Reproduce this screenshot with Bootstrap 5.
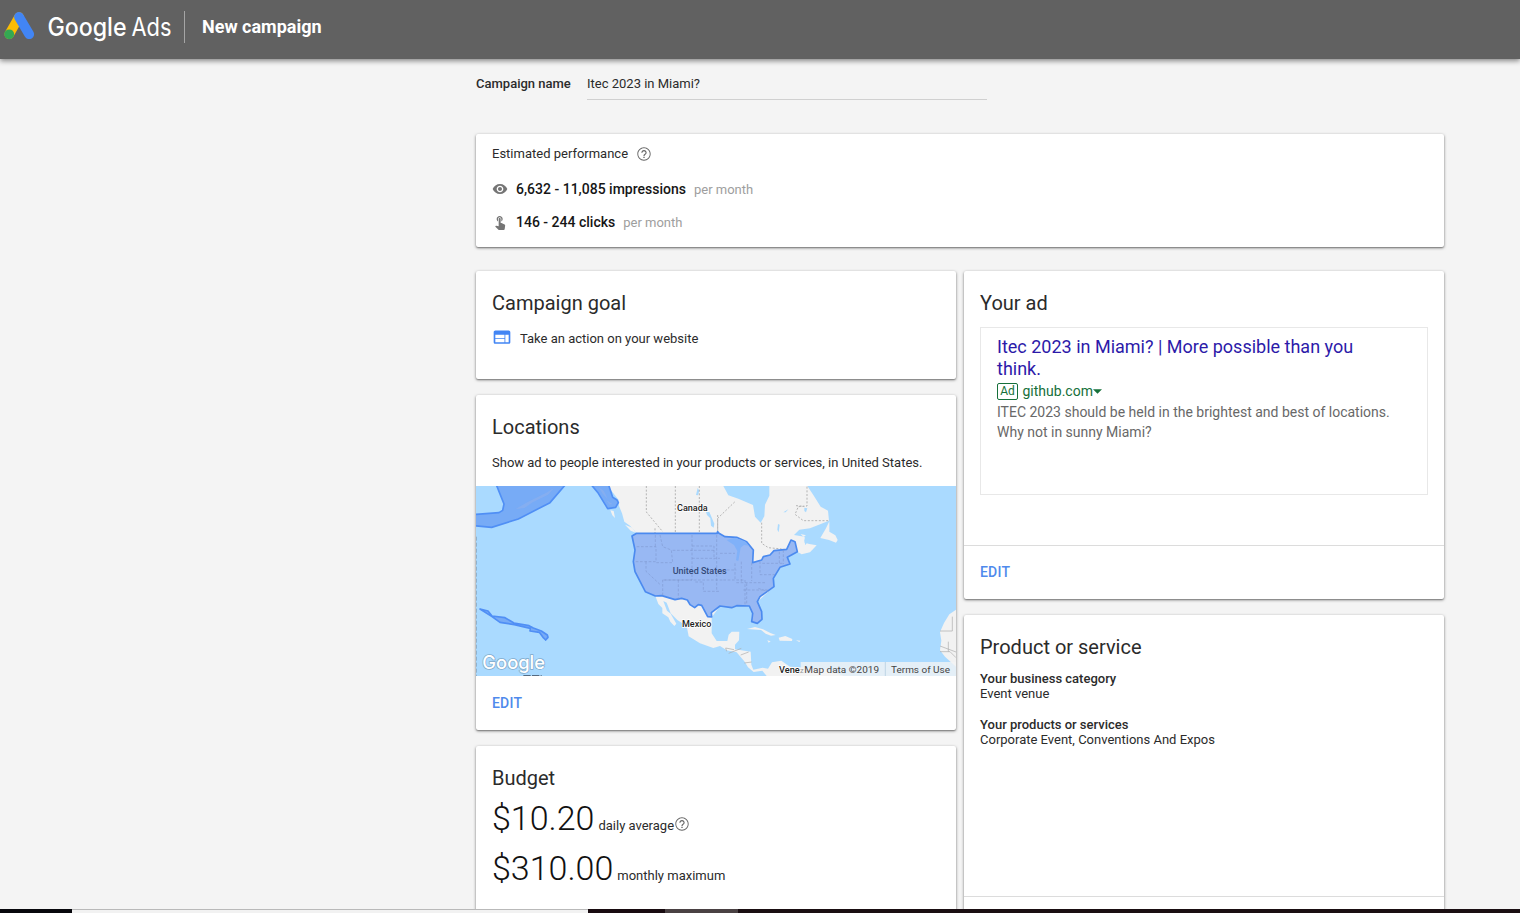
<!DOCTYPE html>
<html lang="en">
<head>
<meta charset="utf-8">
<meta name="viewport" content="width=device-width, initial-scale=1">
<title>New campaign - Google Ads</title>
<link href="https://cdn.jsdelivr.net/npm/bootstrap@5.3.0/dist/css/bootstrap.min.css" rel="stylesheet">
<style>
body{font-family:Roboto,"Liberation Sans",sans-serif;font-size:13px;line-height:15px;color:#2b2b2b;background:#f4f4f4}
svg{display:block;flex:none}
.topbar{height:59px;background:#616161;box-shadow:0 2px 5px rgba(0,0,0,.45);z-index:2;padding:0 0 5px 3px}
.topbar .rule{width:1px;height:32px;background:#a5a5a5;margin:0 17px 0 5px}
.topbar h1{font-size:18px;line-height:22px;font-weight:700;color:#fff}
.content{width:968px;margin-left:476px;padding-top:10px}
.name-field{width:400px;height:31px;border-bottom:1px solid #d0d0d0;padding-top:7px}
.name-label{width:111px;padding-top:7px}
.name-row{margin-bottom:34px}
.fw-medium{font-weight:500}
.nudge{transform:translateY(1px)}
.panel{border:0;border-radius:2px;background:#fff;box-shadow:0 1px 3px rgba(0,0,0,.5),0 1px 1px rgba(0,0,0,.16);color:inherit}
.panel h2{font-size:20px;line-height:24px;font-weight:400;margin:0}
.perf{height:113px;padding:11px 16px;margin-bottom:24px;gap:15px}
.stat{font-size:14px;line-height:18px;color:#161616}
.first-stat{margin-top:4px}
.per{font-size:13px;color:#9e9e9e}
.col-cards{width:480px;gap:16px}
.goal{height:108px;padding:20px 16px}
.goal-line{margin-top:13px}
.goal-text{padding-top:3px}
.loc{height:335px}
.loc-head{height:91px;padding:20px 16px 0}
.map{height:190px}
.edit{font-size:14px;line-height:16px;font-weight:500;color:#4f8aec;text-decoration:none;letter-spacing:.2px}
.loc-foot{padding:19px 16px 0}
.ad-foot{padding:18px 16px 0}
.budget{height:220px;padding:20px 16px}
.money{font-size:34px;line-height:40px;font-weight:300;color:#111;margin-right:4px}
.daily{margin-top:8px}
.daily svg{margin:10px 0 0 0}
.monthly{margin-top:10px}
.ad{height:328px}
.ad-body{height:275px;padding:20px 16px 0;border-bottom:1px solid #dcdcdc}
.preview{height:168px;border:1px solid #e8e8e8;padding:8px 16px;margin-top:12px}
.headline{font-size:18px;line-height:22px;color:#2c1aa9;width:380px}
.site{font-size:14px;line-height:22px;color:#16703a}
.adtag{border:1px solid #16703a;border-radius:2px;font-size:12px;line-height:15px;text-align:center;white-space:nowrap;height:17px;width:21px;margin-right:4.500px}
.desc{font-size:14px;line-height:20px;color:#686868}
.product{height:330px}
.product-body{height:282px;padding:20px 16px 0;border-bottom:1px solid #dcdcdc}
.taskbar{height:4px;z-index:3;background:#1a0e12}
.tb-a{width:72px;background:#07070c}.tb-b{width:516px;background:#f2f2f2;border-top:1px solid #b9b9b9}.tb-c{width:77px;background:#180b10}.tb-d{width:73px;background:#4a4143}
</style>
</head>
<body class="vh-100 overflow-hidden d-flex flex-column">
<svg width="0" height="0" class="position-absolute"><defs>
<symbol id="help" viewBox="0 0 24 24"><path d="M11 18h2v-2h-2v2zm1-16C6.480 2 2 6.480 2 12s4.480 10 10 10 10-4.480 10-10S17.520 2 12 2zm0 18.600c-4.700 0-8.600-3.900-8.600-8.600S7.300 3.400 12 3.400s8.600 3.900 8.600 8.600-3.900 8.600-8.600 8.600zm0-14.600c-2.210 0-4 1.790-4 4h1.700c0-1.200 1-2.300 2.300-2.300s2.300 1.100 2.300 2.300c0 2-3.200 1.750-3.200 5h1.700c0-2.250 3.200-2.500 3.200-5 0-2.210-1.790-4-4-4z"/></symbol>
</defs></svg>

<header class="topbar d-flex align-items-center flex-shrink-0 position-relative">
  <svg width="176" height="40" viewBox="3 7 176 40">
    <path d="M19 17 9.300 34.200" stroke="#fbbc04" stroke-width="9.600" stroke-linecap="round"/>
    <path d="M19 17 29.200 34.200" stroke="#4285f4" stroke-width="9.800" stroke-linecap="round"/>
    <circle cx="9.200" cy="34.300" r="4.900" fill="#34a853"/>
    <g fill="#fff" font-family="Inter, sans-serif" font-size="25">
      <text x="47.500" y="35.700" textLength="79" lengthAdjust="spacingAndGlyphs" font-weight="500">Google</text>
      <text x="131.500" y="35.700" textLength="40" lengthAdjust="spacingAndGlyphs" font-weight="400">Ads</text>
    </g>
  </svg>
  <div class="rule"></div>
  <h1 class="m-0">New campaign</h1>
</header>

<main class="flex-grow-1 overflow-hidden">
  <div class="content">
    <div class="name-row d-flex">
      <div class="name-label fw-medium">Campaign name</div>
      <div class="name-field">Itec 2023 in Miami?</div>
    </div>

    <section class="card panel perf">
      <div class="d-flex align-items-center">Estimated performance
        <svg class="ms-2 nudge" width="16" height="16" fill="#666"><use href="#help"/></svg></div>
      <div class="first-stat d-flex align-items-center">
        <svg width="16" height="16" viewBox="0 0 24 24" fill="#757575"><path d="M12 4.500C7 4.500 2.730 7.610 1 12c1.730 4.390 6 7.500 11 7.500s9.270-3.110 11-7.500c-1.730-4.390-6-7.500-11-7.500zM12 17c-2.760 0-5-2.240-5-5s2.240-5 5-5 5 2.240 5 5-2.240 5-5 5zm0-8c-1.660 0-3 1.340-3 3s1.340 3 3 3 3-1.340 3-3-1.340-3-3-3z"/></svg>
        <span class="stat fw-medium mx-2">6,632 - 11,085 impressions</span><span class="per">per month</span></div>
      <div class="d-flex align-items-center">
        <svg width="16" height="16" viewBox="0 0 24 24" fill="#757575"><path d="M9 11.240V7.500C9 6.120 10.120 5 11.500 5S14 6.120 14 7.500v3.740c1.210-.81 2-2.180 2-3.740C16 5.010 13.990 3 11.500 3S7 5.010 7 7.500c0 1.560.79 2.930 2 3.740zm9.840 4.630-4.540-2.260c-.17-.07-.35-.11-.54-.11H13v-6c0-.83-.67-1.500-1.500-1.500S10 6.670 10 7.500v10.740l-3.430-.72c-.08-.01-.15-.03-.24-.03-.31 0-.59.13-.79.33l-.79.8 4.940 4.940c.27.270.650.440 1.060.440h6.790c.75 0 1.330-.55 1.440-1.280l.75-5.270c.01-.07.02-.14.02-.2 0-.62-.38-1.160-.91-1.380z"/></svg>
        <span class="stat fw-medium mx-2">146 - 244 clicks</span><span class="per">per month</span></div>
    </section>

    <div class="d-flex gap-2">
      <div class="col-cards d-flex flex-column">
        <section class="card panel goal">
          <h2>Campaign goal</h2>
          <div class="goal-line d-flex align-items-start">
            <svg class="me-2" width="20" height="20" viewBox="0 1 24 24" fill="#4285f4"><path d="M20 4H4c-1.100 0-1.990.9-1.990 2L2 18c0 1.100.9 2 2 2h16c1.100 0 2-.9 2-2V6c0-1.100-.9-2-2-2zm-5 14H4v-4h11v4zm0-5H4V9h11v4zm5 5h-4V9h4v9z"/></svg>
            <span class="goal-text">Take an action on your website</span></div>
        </section>

        <section class="card panel loc">
          <div class="loc-head"><h2>Locations</h2><div class="mt-3">Show ad to people interested in your products or services, in United States.</div></div>
          <svg class="map" width="480" height="190" viewBox="18 18 1440 570">
            <rect x="18" y="18" width="1440" height="570" fill="#aadaff"/>
            <!-- continents and islands -->
            <g fill="#f2f2f2">
              <path d="M413 18L446 60 447 78 456 100 463 125 480 137 500 160 486 168 495 210 490 245 495 275 525 335 556 348 565 372 577 384 577 400 595 412 601 425 613 438 619 431 602 401 591 392 580 363 590 368 602 400 622 420 650 438 656 469 690 490 730 504 750 498 770 511 800 517 824 545 834 562 851 576 877 572 890 588 1120 588 1065 566 960 560 934 542 906 547 894 566 878 563 850 569 844 554 842 515 795 508 795 494 807 481 808 455 785 455 776 464 772 483 740 483 725 460 725 412 750 378 838 378 846 400 843 426 862 430 876 420 875 395 862 365 912 320 908 295 930 262 960 252 953 234 982 215 995 223 1020 217 1040 196 1018 192 1004 188 1004 170 972 165 988 149 1020 145 1077 122 1074 92 1052 80 1030 45 1012 18 898 18 898 47 885 74 883 109 872 128 855 110 849 75 805 56 775 46 760 18Z"/>
              <path d="M1078 124L1068 145 1051 174 1077 180 1098 188 1103 180 1096 166 1078 155Z"/>
              <path d="M831 447L855 441 879 448 901 459 917 465 903 467 887 461 873 450ZM926 473L946 468 967 477 966 483 929 482ZM892 481L902 484 896 488ZM978 481L991 482 988 486ZM421 91L431 93 435 114 427 106ZM465 134L487 143 497 158 482 152Z"/>
              <path d="M1458 389L1438 403 1422 429 1410 456 1414 482 1410 511 1425 530 1458 560Z"/>
              <path d="M992 162L1008 166 1000 170Z"/>
            </g>
            <!-- lakes -->
            <g fill="#aadaff"><path d="M678 45l5-21 5 8-4 14zM708 96l10 0 15 35-2 12-8-6-2-22-10-10zM1003 83l9 2-4 12-5-4zM940 97l15-9-8 9zM924 132l5 2-3 23-4-8zM1010 190l-8-14 4 20z"/></g>
            <g fill="none" stroke="#a8a8a8" stroke-width="2.500" stroke-dasharray="6 5">
              <path d="M529 18V96L578 155M616 18V160M688 18V160M743 105V160V115L795 65M875 128V190L895 203 935 207M1011 20V78L985 80 975 103 1000 122H1077M978 77L1003 79M555 145V162"/>
            </g>
            <g fill="none" stroke="#aaa" stroke-width="2"><path d="M792 509l-25-5 3 10M776 520l38-15M812 525l24-9M823 549l22-3M1447 410v43h-37M1410 498l48 18M1410 515h30l18 18M1435 485v30"/></g>
            <!-- selected territory -->
            <g fill="#77abf6" stroke="#508ff5" stroke-width="5" stroke-linejoin="round">
              <path d="M78 12L102 72 98 91 87 98 10 104V137L65 142 145 117 240 68 288 12Z"/>
              <path d="M362 12L385 40 413 86 437 82 445 68 441 60 428 52 415 12Z"/>
              <path d="M30 387L54 393 66 408 105 413 132 429 177 437 190 444 214 453 232 465 234 472 227 480 219 472 208 457 180 453 181 445 133 434 90 427 66 410Z"/>
            </g>
            <g fill="#8fb1ec" opacity=".6"><path d="M137 87l35-20 30-15 30-15 20-13-18 20-46 23-25 17ZM386 22l15 10 12 24-14-13ZM409 60l18 12-9 2Z"/></g>
            <path d="M500 160H741L743 155 747 160 765 170 800 172 830 185 850 210 848 248 875 240 880 230 900 225 912 212 950 208 963 180 975 185 982 215 952 232 960 252 930 262 910 295 912 320 870 350 862 365 875 395 876 418 862 430 845 425 848 400 838 378 800 377 785 383 750 378 724 398 725 411 713 410 695 376 685 374 674 383 660 374 652 360 635 355 615 359 575 347 556 348 526 335 495 275 490 245 495 210 486 168Z" fill="#98b8f3" stroke="#4b8aef" stroke-width="5" stroke-linejoin="round"/>
            <path d="M770 180l25-7 30 11 12 13-15-2-10 8-7 40-7-2 4-28-10-18-15-10z" fill="#80b1f9"/>
            <g fill="none" stroke="#7d97ce" stroke-width="1.700" stroke-dasharray="8 5">
              <path d="M500 200h58v45h-62M556 165v35M570 165l8 35 26 10 4 38h-54M608 211h58v89H578v47M528 245v29l45 42M666 165v46h70M666 235h84M580 300h180M625 300v58M676 306h24v28h50M666 198h66v40M740 165v170M750 220h45M745 270h54M760 300h65v80M795 250v50M799 308h90M814 245v65M845 248v55M870 244v40h45M820 330h78M830 310v65M865 325l30 10M877 250h60M928 215v35M940 210v42"/>
            </g>
            <path d="M19 170V588" stroke="#7891a5" stroke-width="2" stroke-dasharray="12 6"/>
            <path d="M160 587h55" stroke="#46576a" stroke-width="3" stroke-dasharray="22 4"/>
            <g font-family="Roboto, sans-serif" font-size="26" font-weight="500" fill="#222" stroke="#fff" stroke-width="4" paint-order="stroke">
              <text x="621" y="92" textLength="92" lengthAdjust="spacingAndGlyphs">Canada</text>
              <text x="636" y="441" textLength="88" lengthAdjust="spacingAndGlyphs">Mexico</text>
              <text x="927" y="580" textLength="62" lengthAdjust="spacingAndGlyphs">Vene</text>
              <text x="608" y="281" textLength="162" lengthAdjust="spacingAndGlyphs" fill="#344a78" stroke="none">United States</text>
            </g>
            <rect x="992" y="546" width="466" height="42" fill="#f5f5f5" opacity=".78"/>
            <path d="M1246 546v42" stroke="#aac8dd" stroke-width="2"/>
            <g font-family="Roboto, sans-serif" font-size="28" fill="#444">
              <text x="990" y="579" font-size="22" fill="#999">z</text>
              <text x="1003" y="579" textLength="224" lengthAdjust="spacingAndGlyphs">Map data ©2019</text>
              <text x="1263" y="579" textLength="177" lengthAdjust="spacingAndGlyphs">Terms of Use</text>
            </g>
            <text x="37" y="566" font-family="Inter, sans-serif" font-size="55" font-weight="500" textLength="188" lengthAdjust="spacingAndGlyphs" fill="#fff" stroke="#7fa9c9" stroke-width="4" paint-order="stroke">Google</text>
          </svg>
          <div class="loc-foot"><a href="#" class="edit d-block">EDIT</a></div>
        </section>

        <section class="card panel budget">
          <h2>Budget</h2>
          <div class="daily d-flex align-items-baseline"><span class="money">$10.20</span>daily average<svg class="align-self-center nudge" width="16" height="16" fill="#666"><use href="#help"/></svg></div>
          <div class="monthly d-flex align-items-baseline"><span class="money">$310.00</span>monthly maximum</div>
        </section>
      </div>

      <div class="col-cards d-flex flex-column">
        <section class="card panel ad">
          <div class="ad-body"><h2>Your ad</h2>
            <div class="preview">
              <div class="headline">Itec 2023 in Miami? | More possible than you think.</div>
              <div class="site d-flex align-items-center"><span class="adtag">Ad</span>github.com<svg width="9" height="5" viewBox="0 0 9 5" fill="#16703a"><path d="M0 .3h9L4.500 4.800z"/></svg></div>
              <div class="desc">ITEC 2023 should be held in the brightest and best of locations.<br>Why not in sunny Miami?</div>
            </div>
          </div>
          <div class="ad-foot"><a href="#" class="edit d-block">EDIT</a></div>
        </section>
        <section class="card panel product">
          <div class="product-body"><h2>Product or service</h2>
            <div class="fw-medium mt-2 pt-1">Your business category</div><div>Event venue</div>
            <div class="fw-medium mt-3">Your products or services</div><div>Corporate Event, Conventions And Expos</div>
          </div>
        </section>
      </div>
    </div>
  </div>
</main>
<footer class="taskbar d-flex flex-shrink-0"><div class="tb-a"></div><div class="tb-b"></div><div class="tb-c"></div><div class="tb-d"></div></footer>
<script src="https://cdn.jsdelivr.net/npm/bootstrap@5.3.0/dist/js/bootstrap.bundle.min.js"></script>
</body>
</html>
